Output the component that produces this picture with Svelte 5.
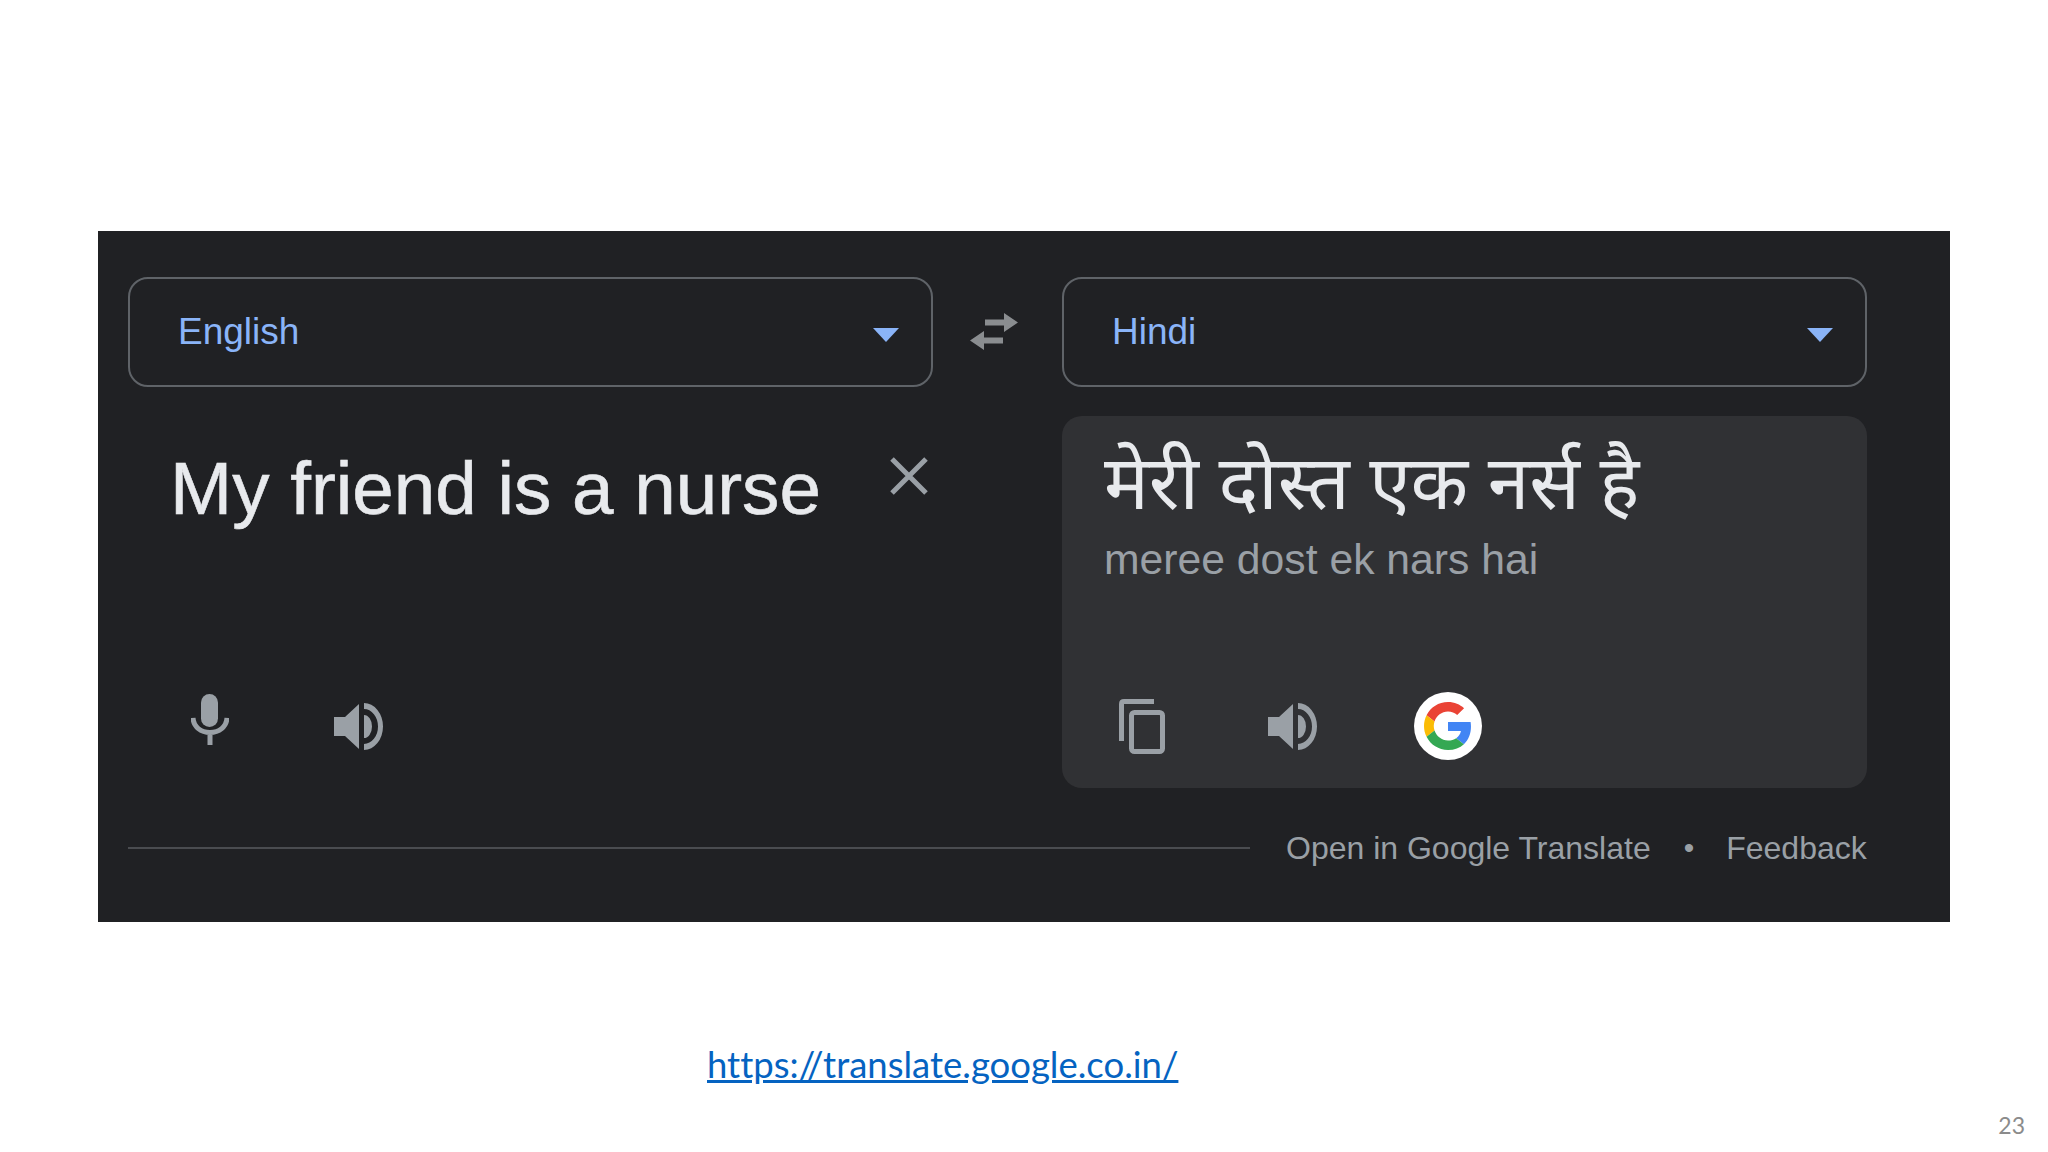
<script>
	const speaker =
		'M0 14 H11 L25 1 V46 L11 33 H0 Z M30 0 A19 23.500 0 0 1 30 47 V41 A14 17.500 0 0 0 30 6 Z M30 12 A8 11.500 0 0 1 30 35 Z';
</script>

{#snippet sound()}
	<svg class="sound" viewBox="0 0 50 47" aria-hidden="true"><path d={speaker} /></svg>
{/snippet}

{#snippet caret()}
	<svg class="caret" viewBox="0 0 26 14" aria-hidden="true"><path d="M0 0 H26 L13 14 Z" /></svg>
{/snippet}

<main class="slide">
	<section class="panel">
		<div class="top">
			<div class="select"><span>English</span>{@render caret()}</div>
			<div class="swap">
				<svg viewBox="0 0 48 37" aria-hidden="true">
					<path d="M34 0 L48 9.500 L34 19 V12.500 H15 V6.500 H34 Z M14 18 V24.500 H33 V30.500 H14 V37 L0 27.500 Z" />
				</svg>
			</div>
			<div class="select"><span>Hindi</span>{@render caret()}</div>
		</div>

		<div class="boxes">
			<div class="box source">
				<div class="source-head">
					<p class="big">My friend is a nurse</p>
					<svg class="close" viewBox="0 0 38 38" aria-hidden="true">
						<path d="M2 2 L36 36 M36 2 L2 36" />
					</svg>
				</div>
				<div class="tools">
					<svg class="mic" viewBox="0 0 38 51" aria-hidden="true">
						<rect x="10" y="0" width="17" height="33" rx="8.500" />
						<path class="line" d="M2 24 C2.500 33 10 38.500 19 38.500 C28 38.500 35.500 33 36 24 M19 38.500 V51" />
					</svg>
					{@render sound()}
				</div>
			</div>

			<div class="box output">
				<p class="hindi">मेरी दोस्त एक नर्स है</p>
				<p class="roman">meree dost ek nars hai</p>
				<div class="tools">
					<svg class="copy" viewBox="0 0 46 55" aria-hidden="true">
						<path class="line" d="M2.500 42 V5 Q2.500 2.500 5 2.500 H35" />
						<rect class="line" x="12.500" y="13.500" width="31" height="39" rx="3" />
					</svg>
					{@render sound()}
					<div class="badge">
						<svg viewBox="0 0 48 48" aria-hidden="true">
							<path fill="#ea4335" d="M24 9.500c3.540 0 6.710 1.220 9.210 3.600l6.850-6.850C35.900 2.380 30.470 0 24 0 14.620 0 6.510 5.380 2.560 13.220l7.980 6.190C12.430 13.720 17.740 9.500 24 9.500z" />
							<path fill="#4285f4" d="M46.980 24.550c0-1.570-.15-3.090-.38-4.550H24v9.020h12.940c-.58 2.960-2.260 5.480-4.780 7.180l7.730 6c4.510-4.180 7.090-10.360 7.090-17.650z" />
							<path fill="#fbbc05" d="M10.530 28.590c-.48-1.450-.76-2.990-.76-4.590s.27-3.140.76-4.590l-7.980-6.190C.92 16.460 0 20.120 0 24c0 3.880.92 7.540 2.560 10.780l7.970-6.190z" />
							<path fill="#34a853" d="M24 48c6.480 0 11.930-2.130 15.890-5.810l-7.730-6c-2.150 1.450-4.920 2.300-8.160 2.300-6.260 0-11.570-4.220-13.470-9.910l-7.980 6.190C6.510 42.620 14.620 48 24 48z" />
						</svg>
					</div>
				</div>
			</div>
		</div>

		<footer class="foot">
			<div class="rule"></div>
			<span>Open in Google Translate</span>
			<span class="dot">•</span>
			<span>Feedback</span>
		</footer>
	</section>

	<div class="link-row">
		<a href="https://translate.google.co.in/">https://translate.google.co.in/</a>
	</div>
	<div class="page-no">23</div>
</main>

<style>
	:global(body) {
		margin: 0;
		background: #fff;
	}
	.slide {
		width: 2048px;
		height: 1152px;
		padding-top: 231px;
		box-sizing: border-box;
		overflow: hidden;
		font-family: 'Liberation Sans', Arial, sans-serif;
	}
	p {
		margin: 0;
	}

	.panel {
		width: 1852px;
		height: 691px;
		margin-left: 98px;
		padding: 46px 83px 0 30px;
		box-sizing: border-box;
		background: #202124;
	}
	.top,
	.boxes {
		display: grid;
		grid-template-columns: 805px 1fr 805px;
	}
	.top > :last-child,
	.boxes > :last-child {
		grid-column: 3;
	}
	.select {
		height: 110px;
		box-sizing: border-box;
		border: 2px solid #5f6368;
		border-radius: 20px;
		padding: 0 32px 0 48px;
		display: flex;
		align-items: center;
		justify-content: space-between;
		color: #8ab4f8;
		font-size: 37px;
	}
	.caret {
		width: 26px;
		height: 14px;
		margin-top: 6px;
		fill: #8ab4f8;
	}
	.swap {
		display: flex;
		justify-content: center;
		padding: 36px 8px 0 0;
	}
	.swap svg {
		width: 48px;
		height: 37px;
		fill: #8a8d90;
	}

	.boxes {
		margin-top: 29px;
		height: 372px;
	}
	.box {
		display: flex;
		flex-direction: column;
	}
	.source {
		padding-left: 42px;
	}
	.source-head {
		display: flex;
		justify-content: space-between;
		padding-right: 5px;
	}
	.big {
		font-size: 74.600px;
		line-height: 84px;
		margin-top: 30px;
		color: #e8eaed;
		-webkit-text-stroke: 0.6px #e8eaed;
	}
	.close {
		width: 38px;
		height: 38px;
		margin-top: 41px;
		fill: none;
		stroke: #9aa0a6;
		stroke-width: 5;
	}
	.output {
		background: #303134;
		border-radius: 20px;
		padding-left: 42px;
	}
	.hindi {
		font-family: 'Noto Sans', 'Noto Sans Devanagari', 'Lohit Devanagari', sans-serif;
		font-size: 75px;
		line-height: 84px;
		margin-top: 22px;
		color: #e8eaed;
	}
	.roman {
		font-size: 42.700px;
		line-height: 48px;
		margin-top: 13px;
		color: #9aa0a6;
	}
	.tools {
		margin-top: auto;
		display: flex;
		align-items: center;
		height: 116px;
		padding-bottom: 4px;
		color: #9aa0a6;
	}
	.source .tools {
		padding-left: 21px;
		gap: 105px;
	}
	.output .tools {
		gap: 103px;
		padding-left: 15px;
	}
	.mic {
		width: 38px;
		height: 51px;
		fill: #9aa0a6;
		margin-top: -14px;
	}
	.sound {
		width: 50px;
		height: 47px;
		fill: #9aa0a6;
	}
	.copy {
		width: 46px;
		height: 55px;
	}
	.line {
		fill: none;
		stroke: #9aa0a6;
		stroke-width: 5;
	}
	.badge {
		width: 68px;
		height: 68px;
		margin-left: -7px;
		border-radius: 50%;
		background: #fff;
		display: flex;
		align-items: center;
		justify-content: center;
	}
	.badge svg {
		width: 48px;
		height: 48px;
	}

	.foot {
		display: flex;
		align-items: center;
		margin-top: 40px;
		color: #9aa0a6;
		font-size: 32px;
		line-height: 40px;
	}
	.rule {
		width: 1122px;
		height: 2px;
		margin-right: 36px;
		background: #4a4c50;
	}
	.dot {
		margin: 0 32px 0 33px;
		font-size: 30px;
	}

	.link-row {
		margin: 120px 0 0 707px;
		font-family: Lato, Carlito, sans-serif;
		font-size: 36.500px;
		line-height: 44px;
		font-variant-ligatures: none;
	}
	.link-row a {
		color: #0563c1;
		text-decoration: underline;
	}
	.page-no {
		margin: 25px 23px 0 0;
		text-align: right;
		font-family: Lato, Carlito, sans-serif;
		font-size: 23px;
		color: #8b8b8b;
	}
</style>
